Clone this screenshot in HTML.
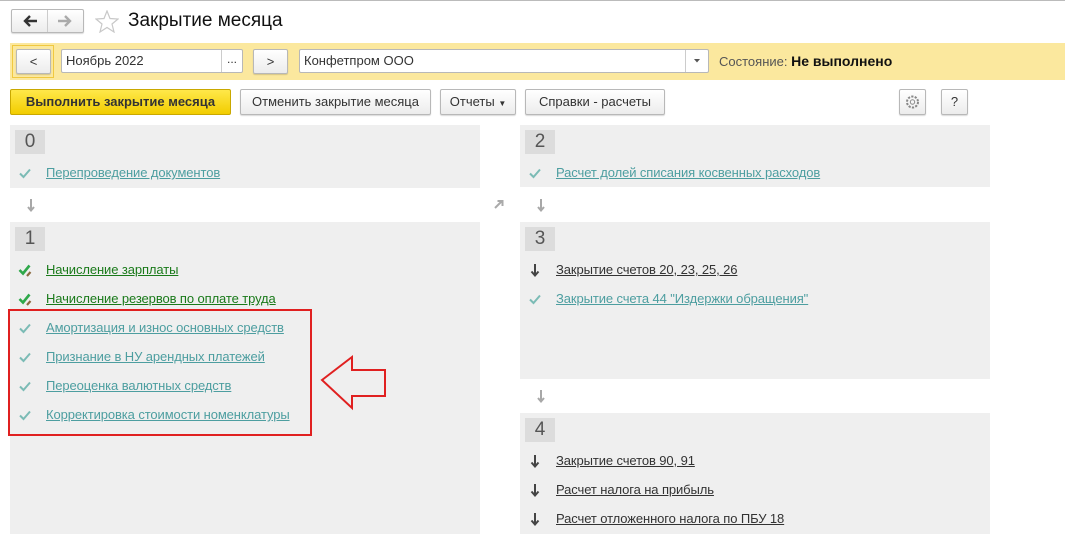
<!DOCTYPE html>
<html><head><meta charset="utf-8"><style>
*{box-sizing:border-box;margin:0;padding:0}
body{width:1065px;height:534px;overflow:hidden;background:#fff;font-family:"Liberation Sans",sans-serif;font-size:13px;color:#333;position:relative}
.a{position:absolute}
.btn{position:absolute;border:1px solid #b8b8b8;border-radius:2px;background:linear-gradient(#fff,#ececec);box-shadow:0 1px 1px rgba(0,0,0,.15);text-align:center;color:#333;font-size:13px}
.panel{position:absolute;background:#efefef}
.num{position:absolute;left:5px;top:5px;width:30px;height:24px;background:#dcdcdc;font-size:19px;color:#555;text-align:center;line-height:24px}
.item{position:absolute;left:36px;white-space:nowrap;text-decoration:underline;letter-spacing:-0.1px}
.t{color:#4d9ea0}
.g{color:#1a7a1a}
.k{color:#333}
.ic{position:absolute;left:8px}
.inp{position:absolute;background:#fff;border:1px solid #b8b8b8;border-radius:2px;height:24px;line-height:22px;padding-left:4px}
</style></head><body>
<svg width="0" height="0" style="position:absolute"><defs>
<symbol id="chk" viewBox="0 0 14 14"><path d="M2 7.5 L5.5 11 L12 3.5" fill="none" stroke="#7bbbb5" stroke-width="2"/></symbol>
<symbol id="gchk" viewBox="0 0 14 14"><path d="M1.5 7 L5 10.5 L11.5 2.5" fill="none" stroke="#2ea84a" stroke-width="2.6"/><path d="M9 13 L12.5 9" stroke="#8a6a40" stroke-width="2.2"/></symbol>
<symbol id="dn" viewBox="0 0 14 14"><path d="M7 1 V12 M3.5 8.5 L7 12.5 L10.5 8.5" fill="none" stroke="#444" stroke-width="2"/></symbol>
<symbol id="dng" viewBox="0 0 14 14"><path d="M7 1 V12 M4 9 L7 12.5 L10 9" fill="none" stroke="#a8a8a8" stroke-width="2"/></symbol>
</defs></svg>
<div class="a" style="left:0;top:0;width:1065px;height:1px;background:#bbb"></div>
<div class="btn" style="left:11px;top:9px;width:73px;height:24px"></div>
<div class="a" style="left:47px;top:10px;width:1px;height:22px;background:#ccc"></div>
<svg class="a" style="left:22px;top:14px" width="16" height="14"><path d="M15 7 H4 M8 2 L3 7 L8 12" fill="none" stroke="#333" stroke-width="2.4"/></svg>
<svg class="a" style="left:57px;top:14px" width="16" height="14"><path d="M1 7 H12 M8 2 L13 7 L8 12" fill="none" stroke="#aaa" stroke-width="2.4"/></svg>
<svg class="a" style="left:95px;top:10px" width="24" height="23" viewBox="0 0 24 23"><polygon points="12,1 15,8.5 23,9 17,14 19,22 12,17.5 5,22 7,14 1,9 9,8.5" fill="none" stroke="#c8c8c8" stroke-width="1.2"/></svg>
<div class="a" style="left:128px;top:10px;font-size:19px;color:#111">Закрытие месяца</div>

<div class="a" style="left:10px;top:43px;width:1055px;height:37px;background:#fbe89e"></div>
<div class="a" style="left:12px;top:45px;width:42px;height:33px;border:1px solid #f0c840"></div>
<div class="btn" style="left:16px;top:49px;width:35px;height:25px;line-height:23px">&lt;</div>
<div class="inp" style="left:61px;top:49px;width:182px">Ноябрь 2022</div>
<div class="a" style="left:221px;top:50px;width:1px;height:22px;background:#ccc"></div>
<div class="a" style="left:227px;top:52px;font-size:12px">...</div>
<div class="btn" style="left:253px;top:49px;width:35px;height:25px;line-height:23px">&gt;</div>
<div class="inp" style="left:299px;top:49px;width:410px">Конфетпром ООО</div>
<div class="a" style="left:685px;top:50px;width:1px;height:22px;background:#ccc"></div>
<svg class="a" style="left:694px;top:59px" width="6" height="4"><path d="M0 0 H6 L3 3.5Z" fill="#555"/></svg>
<div class="a" style="left:719px;top:53px;color:#555">Состояние: <b style="color:#111;font-size:14px">Не выполнено</b></div>

<div class="a" style="left:10px;top:89px;width:221px;height:26px;border:1px solid #c9a800;border-radius:2px;background:linear-gradient(#ffe84a,#f2cd00);font-weight:bold;text-align:center;line-height:24px;color:#333">Выполнить закрытие месяца</div>
<div class="btn" style="left:240px;top:89px;width:191px;height:26px;line-height:24px">Отменить закрытие месяца</div>
<div class="btn" style="left:440px;top:89px;width:76px;height:26px;line-height:24px">Отчеты <span style="font-size:8px">▼</span></div>
<div class="btn" style="left:525px;top:89px;width:140px;height:26px;line-height:24px">Справки - расчеты</div>
<div class="btn" style="left:899px;top:89px;width:27px;height:26px"><svg width="25" height="24" viewBox="0 0 25 24"><circle cx="12.5" cy="12" r="5.5" fill="none" stroke="#888" stroke-width="2" stroke-dasharray="2.2 1.3"/><circle cx="12.5" cy="12" r="2.2" fill="none" stroke="#888"/></svg></div>
<div class="btn" style="left:941px;top:89px;width:27px;height:26px;line-height:24px">?</div>

<div class="panel" style="left:10px;top:125px;width:470px;height:63px"><div class="num">0</div>
<svg class="ic" style="top:41px" width="14" height="14"><use href="#chk"/></svg><div class="item t" style="top:40px">Перепроведение документов</div></div>
<svg class="a" style="left:24px;top:198px" width="14" height="14"><use href="#dng"/></svg>

<div class="panel" style="left:10px;top:222px;width:470px;height:312px"><div class="num">1</div>
<svg class="ic" style="top:41px" width="14" height="14"><use href="#gchk"/></svg><div class="item g" style="top:40px">Начисление зарплаты</div>
<svg class="ic" style="top:70px" width="14" height="14"><use href="#gchk"/></svg><div class="item g" style="top:69px">Начисление резервов по оплате труда</div>
<svg class="ic" style="top:99px" width="14" height="14"><use href="#chk"/></svg><div class="item t" style="top:98px">Амортизация и износ основных средств</div>
<svg class="ic" style="top:128px" width="14" height="14"><use href="#chk"/></svg><div class="item t" style="top:127px">Признание в НУ арендных платежей</div>
<svg class="ic" style="top:157px" width="14" height="14"><use href="#chk"/></svg><div class="item t" style="top:156px">Переоценка валютных средств</div>
<svg class="ic" style="top:186px" width="14" height="14"><use href="#chk"/></svg><div class="item t" style="top:185px">Корректировка стоимости номенклатуры</div>
</div>
<div class="a" style="left:8px;top:309px;width:304px;height:127px;border:2px solid #e02020"></div>
<svg class="a" style="left:318px;top:353px" width="72" height="60"><polygon points="4,27 34,4 34,17 67,17 67,43 34,43 34,55" fill="none" stroke="#e02020" stroke-width="2"/></svg>

<svg class="a" style="left:494px;top:199px" width="10" height="10"><path d="M1 9 L8 2 M3.5 2 H8.5 V7" fill="none" stroke="#aaa" stroke-width="2"/></svg>

<div class="panel" style="left:520px;top:125px;width:470px;height:62px"><div class="num">2</div>
<svg class="ic" style="top:41px" width="14" height="14"><use href="#chk"/></svg><div class="item t" style="top:40px">Расчет долей списания косвенных расходов</div></div>
<svg class="a" style="left:534px;top:198px" width="14" height="14"><use href="#dng"/></svg>

<div class="panel" style="left:520px;top:222px;width:470px;height:157px"><div class="num">3</div>
<svg class="ic" style="top:41px" width="14" height="14"><use href="#dn"/></svg><div class="item k" style="top:40px">Закрытие счетов 20, 23, 25, 26</div>
<svg class="ic" style="top:70px" width="14" height="14"><use href="#chk"/></svg><div class="item t" style="top:69px">Закрытие счета 44 "Издержки обращения"</div></div>
<svg class="a" style="left:534px;top:389px" width="14" height="14"><use href="#dng"/></svg>

<div class="panel" style="left:520px;top:413px;width:470px;height:121px"><div class="num">4</div>
<svg class="ic" style="top:41px" width="14" height="14"><use href="#dn"/></svg><div class="item k" style="top:40px">Закрытие счетов 90, 91</div>
<svg class="ic" style="top:70px" width="14" height="14"><use href="#dn"/></svg><div class="item k" style="top:69px">Расчет налога на прибыль</div>
<svg class="ic" style="top:99px" width="14" height="14"><use href="#dn"/></svg><div class="item k" style="top:98px">Расчет отложенного налога по ПБУ 18</div></div>
</body></html>
